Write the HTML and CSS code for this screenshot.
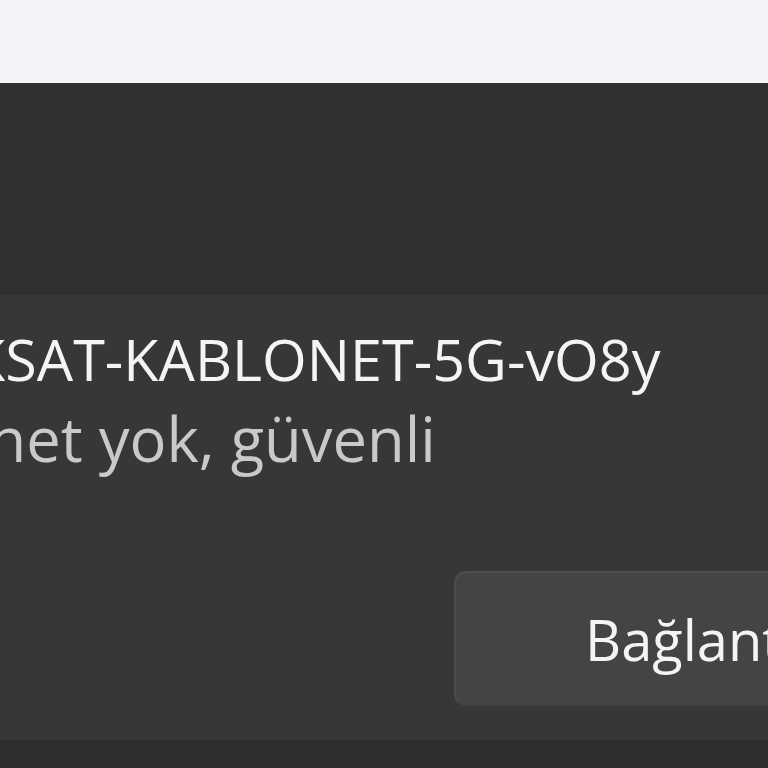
FILE: index.html
```html
<!DOCTYPE html>
<html lang="tr">
<head>
<meta charset="utf-8">
<title>Wi-Fi</title>
<link rel="stylesheet" href="styles.css">
</head>
<body>
<div class="topbar"></div>
<div class="panel">
  <div class="panel-gap"></div>
  <div class="card">
    <div class="texts">
      <div class="ssid">TURKSAT-KABLONET-5G-vO8y</div>
      <div class="status">İnternet yok, güvenli</div>
    </div>
    <div class="actions">
      <button class="btn">Bağlantıyı kes</button>
    </div>
  </div>
  <div class="panel-bottom"></div>
</div>
</body>
</html>
```

FILE: styles.css
```css
html, body {
  margin: 0;
  padding: 0;
  width: 768px;
  height: 768px;
  overflow: hidden;
  background: #303031;
  font-family: "Open Sans", "Noto Sans", sans-serif;
}
.topbar {
  height: 83px;
  background: #f3f4f7;
  box-shadow: 0 1px 0 #c9cacc, 0 2px 0 #7d7e80, 0 3px 0 #3d3e3f;
}
.panel {
  display: flex;
  flex-direction: column;
  height: 685px;
  background: #303031;
}
.panel-gap {
  height: 212px;
  flex: none;
}
.card {
  flex: none;
  height: 445px;
  background: #373738;
  display: flex;
  flex-direction: column;
  overflow: hidden;
}
.texts {
  padding-top: 24px;
  white-space: nowrap;
}
.ssid {
  margin-left: -139px;
  font-size: 57.5px;
  line-height: 81px;
  color: #f4f4f4;
}
.status {
  margin-left: -148px;
  margin-top: -2px;
  font-size: 61.5px;
  line-height: 81px;
  color: #c9c9c9;
}
.actions {
  display: flex;
  padding-top: 92px;
  padding-left: 454px;
}
.btn {
  flex: none;
  width: 400px;
  height: 135px;
  border-radius: 12px;
  border: 2px solid #4c4c4d;
  border-bottom-color: #414142;
  background: #444445;
  color: #f4f4f4;
  font-family: inherit;
  font-size: 56px;
  text-align: left;
  padding: 0 0 0 129px;
  white-space: nowrap;
  overflow: hidden;
}
.panel-bottom {
  flex: 1;
  background: #2e2e2f;
}
```
